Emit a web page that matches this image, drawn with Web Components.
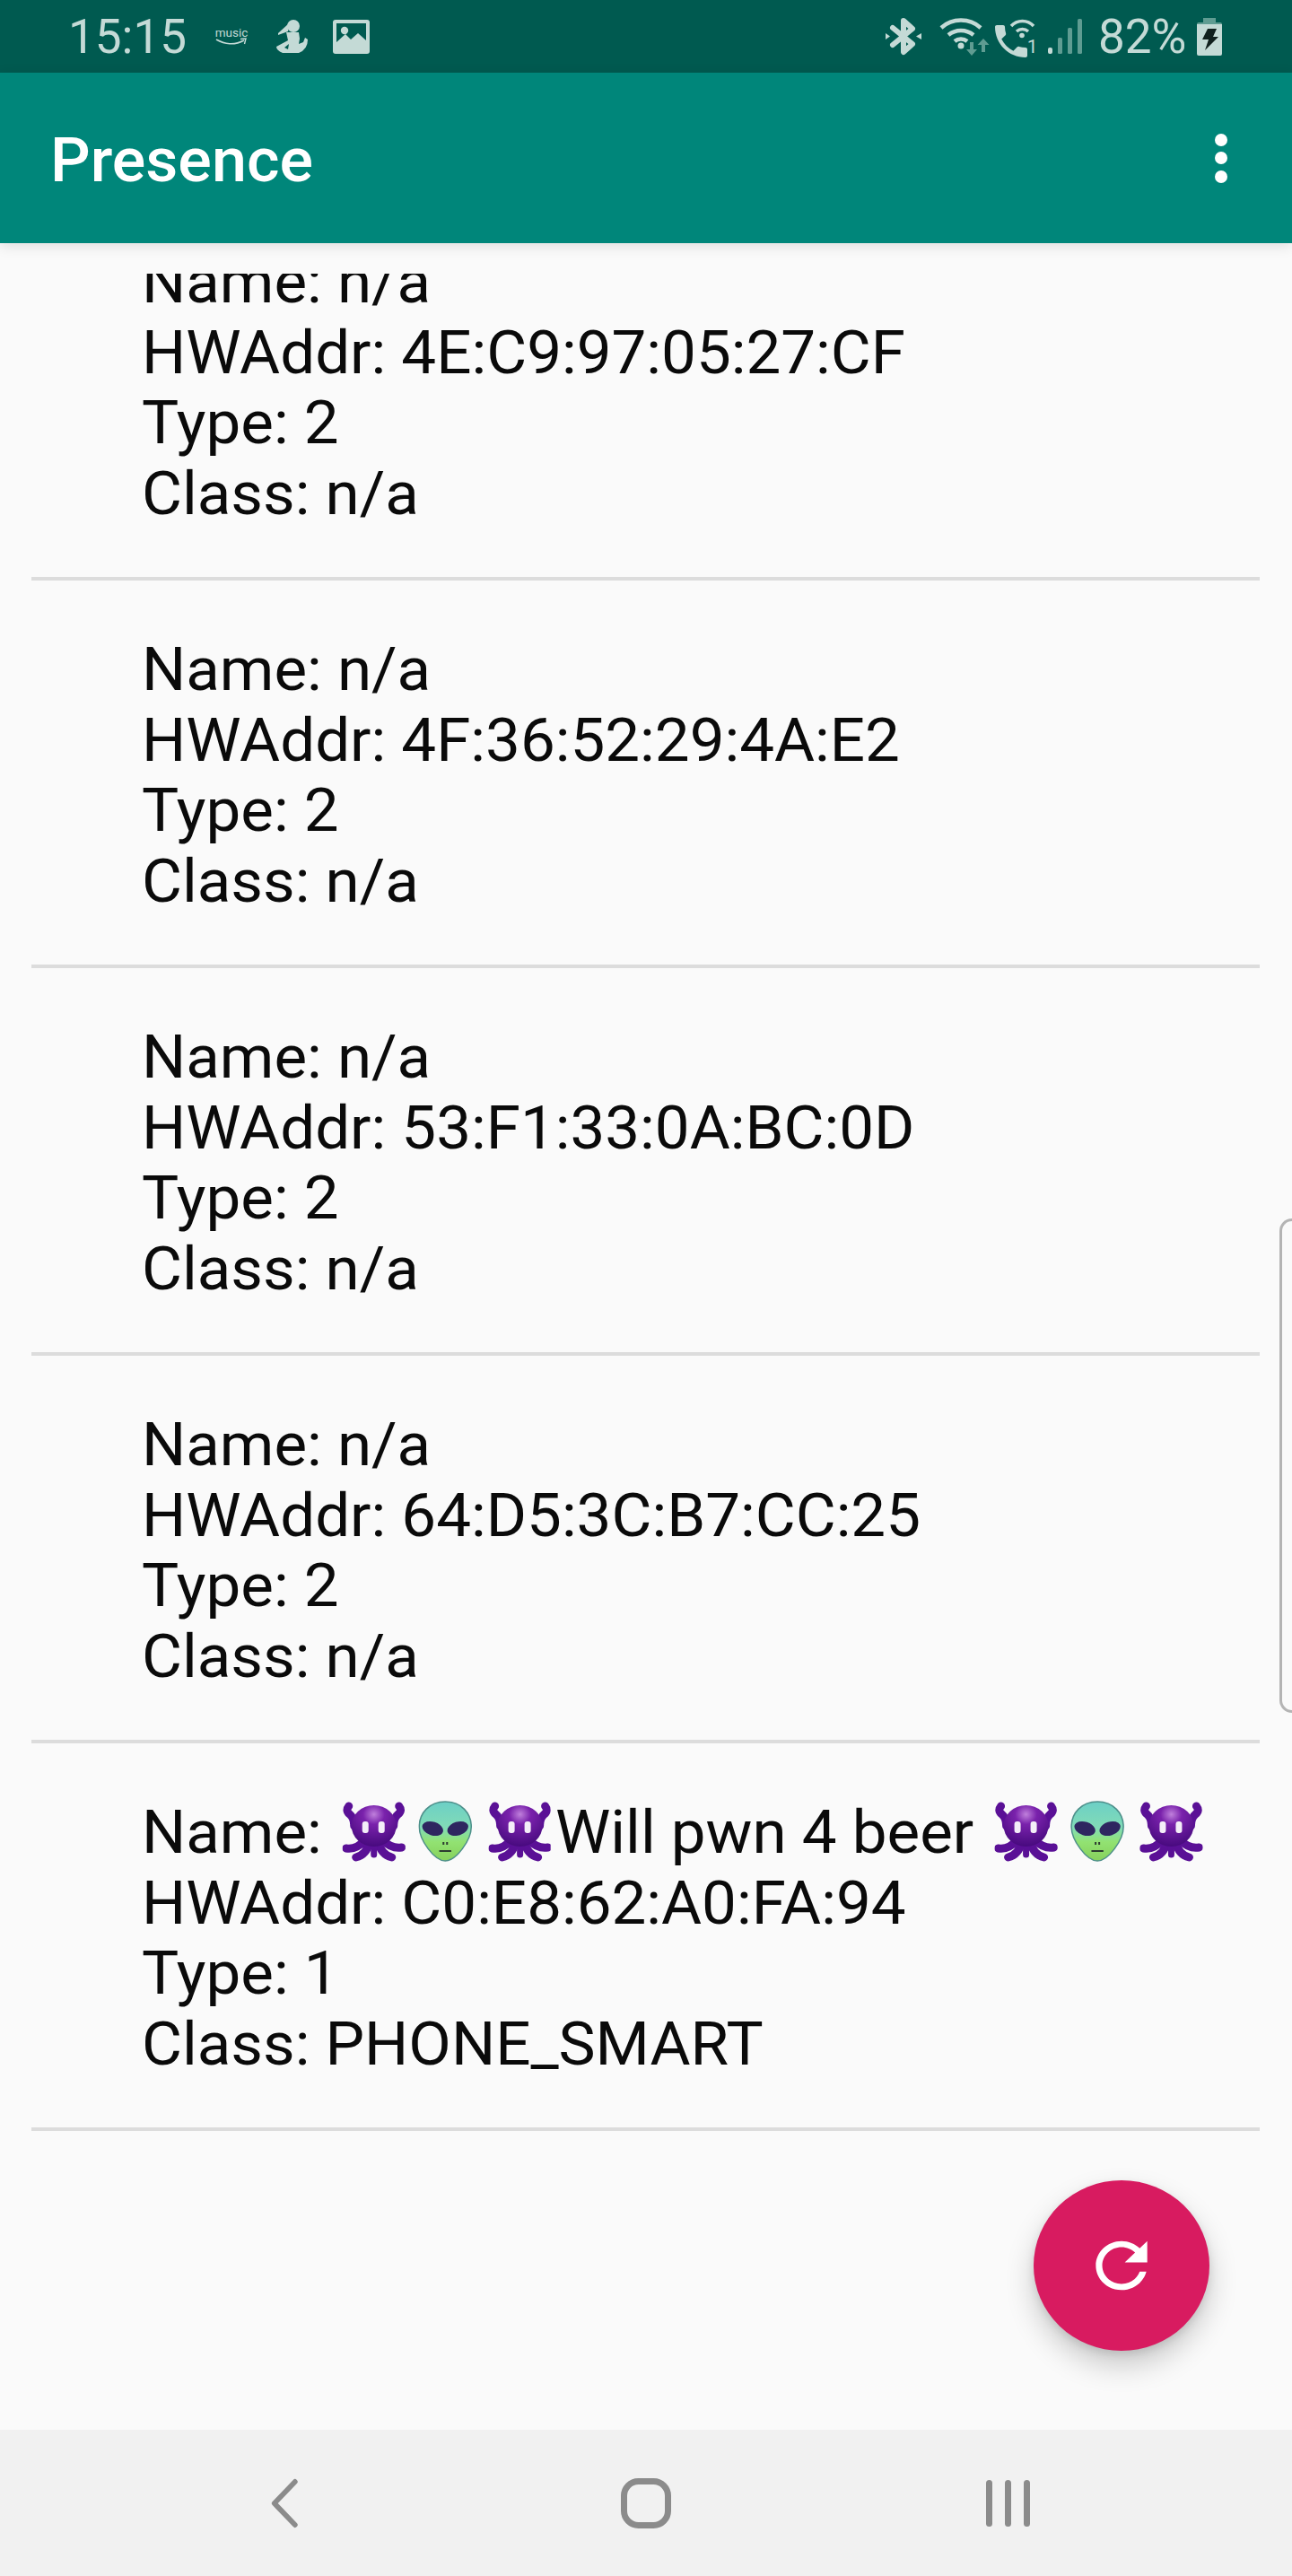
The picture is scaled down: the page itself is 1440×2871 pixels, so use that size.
<!DOCTYPE html>
<html>
<head>
<meta charset="utf-8">
<title>Presence</title>
<style>
html, body { margin: 0; padding: 0; background: #fafafa; }
</style>
</head>
<body>
<presence-app>
  <status-bar slot="status"></status-bar>
  <app-bar slot="bar" title="Presence"></app-bar>
  <device-list slot="list">
    <device-row hw="4E:C9:97:05:27:CF" type="2" cls="n/a">n/a</device-row>
    <device-row hw="4F:36:52:29:4A:E2" type="2" cls="n/a">n/a</device-row>
    <device-row hw="53:F1:33:0A:BC:0D" type="2" cls="n/a">n/a</device-row>
    <device-row hw="64:D5:3C:B7:CC:25" type="2" cls="n/a">n/a</device-row>
    <device-row hw="C0:E8:62:A0:FA:94" type="1" cls="PHONE_SMART"><emoji-octopus></emoji-octopus><emoji-alien></emoji-alien><emoji-octopus></emoji-octopus>Will pwn 4 beer <emoji-octopus></emoji-octopus><emoji-alien></emoji-alien><emoji-octopus></emoji-octopus></device-row>
  </device-list>
  <edge-handle slot="over"></edge-handle>
  <refresh-fab slot="over"></refresh-fab>
  <nav-bar slot="nav"></nav-bar>
</presence-app>

<script>
const LIGHT = '#c4dad6'
const DIM = '#5f9c92'
const DARK = '#005a50'

// status and nav bar glyphs, all in pixels of the 1440 wide screen
const ICONS = {
  music: [36, 22, `
    <text x="18" y="10.5" text-anchor="middle" font-family="Roboto, sans-serif" font-size="13.5" fill="${LIGHT}">music</text>
    <path d="M1 14 Q17 23 32 15" fill="none" stroke="${LIGHT}" stroke-width="1.6"/>
    <path d="M28 13.5 L34 13 L32.5 19" fill="none" stroke="${LIGHT}" stroke-width="1.4"/>`],
  health: [36, 39, `
    <circle cx="20" cy="8" r="7" fill="${LIGHT}"/>
    <path fill="${LIGHT}" d="M15 5 L3 16 L3 18 L14 14 Z"/>
    <path fill="${LIGHT}" d="M12 15 H26 L27 22 L26 28 L31 26 L33 21 L36 23 Q36 34 26 38 H8 Q1 35 1 31 L14 24 Z"/>
    <path fill="${DARK}" d="M15 28 L10 32 L14 34 Z"/>`],
  image: [41, 38, `
    <rect width="41" height="38" rx="3" fill="${LIGHT}"/>
    <path fill="${DARK}" d="M4 4 H37 V23 L28 15 L20 22 L14 16 L4 25 Z"/>
    <circle cx="13" cy="12" r="4.2" fill="${LIGHT}"/>`],
  bluetooth: [40, 43, `
    <path d="M8 12 L30 30 L20 39 V4 L30 13 L8 31" fill="none" stroke="${LIGHT}" stroke-width="6" stroke-linejoin="round" stroke-linecap="round"/>
    <path d="M0 18 L5 21.500 L0 25 Z M40 18 L34 21.500 L40 25 Z" fill="${LIGHT}"/>`],
  wifi: [57, 43, `
    <path d="M2 11 A33 33 0 0 1 46 11" fill="none" stroke="${LIGHT}" stroke-width="4.500"/>
    <path d="M10 19 A22 22 0 0 1 38 19" fill="none" stroke="${LIGHT}" stroke-width="4.500"/>
    <path d="M17 26 A11 11 0 0 1 31 26" fill="none" stroke="${LIGHT}" stroke-width="4.500"/>
    <circle cx="24" cy="31" r="3.500" fill="${LIGHT}"/>
    <path fill="${DIM}" d="M34 27 H38 V35 H42 L36 42 L30 35 H34 Z M47 30 H51 V38 H47 Z M49 23 L55.500 30 H42.500 Z"/>`],
  callwifi: [49, 40, `
    <g transform="translate(-5 1) scale(2)"><path fill="${LIGHT}" d="M6.620 10.790c1.440 2.830 3.760 5.140 6.590 6.590l2.200-2.200c.270-.270.670-.360 1.020-.240 1.120.370 2.330.570 3.570.570.550 0 1 .450 1 1V20c0 .550-.450 1-1 1-9.390 0-17-7.610-17-17 0-.550.450-1 1-1h3.500c.550 0 1 .450 1 1 0 1.250.200 2.450.570 3.570.110.350.030.740-.250 1.020l-2.200 2.200z"/></g>
    <path d="M19 8 A17 17 0 0 1 44 8" fill="none" stroke="${LIGHT}" stroke-width="3.500"/>
    <path d="M25 14 A10 10 0 0 1 38 14" fill="none" stroke="${LIGHT}" stroke-width="3.500"/>
    <circle cx="31" cy="18.500" r="2.800" fill="${LIGHT}"/>
    <text x="48.500" y="38" text-anchor="end" font-family="Roboto, sans-serif" font-size="21" fill="${LIGHT}">1</text>`],
  signal: [38, 39, `
    <rect x="0" y="32" width="5" height="7" rx="2" fill="${LIGHT}"/>
    <rect x="11" y="21" width="5" height="18" rx="1.500" fill="${DIM}"/>
    <rect x="22" y="10" width="5" height="29" rx="1.500" fill="${DIM}"/>
    <rect x="33" y="0" width="5" height="39" rx="1.500" fill="${DIM}"/>`],
  battery: [28, 42, `
    <path fill="${LIGHT}" d="M0 7 H28 V40 Q28 42 26 42 H2 Q0 42 0 40 Z"/>
    <path fill="${DIM}" d="M7 0 H21 V5 H26 Q28 5 28 7 H0 Q0 5 2 5 H7 Z"/>
    <path fill="#10201e" d="M12 12 H22 L18 21 H24 L9 36 L13 24 H6 Z"/>`],
  back: [32, 54, `<path d="M29 3 L5 27 M5 27 L29 51" fill="none" stroke="#8b8b8b" stroke-width="6" stroke-linecap="round" transform="scale(.96 1) translate(1 0)"/>`],
  home: [56, 56, `<rect x="3.500" y="3.500" width="49" height="49" rx="16" fill="none" stroke="#8b8b8b" stroke-width="7"/>`],
  recent: [49, 54, `
    <rect x="0" y="1" width="7" height="52" rx="3.500" fill="#8b8b8b"/>
    <rect x="21" y="1" width="7" height="52" rx="3.500" fill="#8b8b8b"/>
    <rect x="42" y="1" width="7" height="52" rx="3.500" fill="#8b8b8b"/>`],
}

class BarIcon extends HTMLElement {
  connectedCallback() {
    const [w, h, body] = ICONS[this.getAttribute('name')]
    const shadow = this.attachShadow({mode: 'open'})
    shadow.innerHTML = `
<style>
:host { display: block; line-height: 0; flex: none; }
svg { display: block; overflow: visible; }
</style>
<svg width="${w}" height="${h}" viewBox="0 0 ${w} ${h}">${body}</svg>`
  }
}
customElements.define('bar-icon', BarIcon)

class PresenceApp extends HTMLElement {
  constructor() {
    super()
    const shadow = this.attachShadow({mode: 'open'})
    shadow.innerHTML = `
<style>
:host {
  display: flex;
  flex-direction: column;
  position: relative;
  width: 1440px;
  height: 2871px;
  overflow: hidden;
  background: #fafafa;
  font-family: Roboto, "Liberation Sans", sans-serif;
}
::slotted(device-list) { flex: 1; min-height: 0; }
</style>
<slot name="status"></slot>
<slot name="bar"></slot>
<slot name="list"></slot>
<slot name="over"></slot>
<slot name="nav"></slot>`
  }
}
customElements.define('presence-app', PresenceApp)

class StatusBar extends HTMLElement {
  constructor() {
    super()
    const shadow = this.attachShadow({mode: 'open'})
    shadow.innerHTML = `
<style>
:host {
  display: flex;
  align-items: center;
  height: 81px;
  padding: 0 78px 0 76px;
  box-sizing: border-box;
  background: ${DARK};
  color: ${LIGHT};
  font-size: 53px;
  font-weight: 400;
}
.group { display: flex; align-items: center; }
.right { margin-left: auto; }
.time { width: 134px; }
.music { margin-left: 30px; }
.health { margin-left: 31px; }
.image { margin-left: 28px; }
.wifi { margin-left: 20px; margin-top: 1px; }
.callwifi { margin-left: 4px; }
.signal { margin-left: 11px; }
.pct { margin-left: 18px; width: 100px; }
.battery { margin-left: 10px; }
</style>
<div class="group">
  <span class="time">15:15</span>
  <bar-icon class="music" name="music"></bar-icon>
  <bar-icon class="health" name="health"></bar-icon>
  <bar-icon class="image" name="image"></bar-icon>
</div>
<div class="group right">
  <bar-icon name="bluetooth"></bar-icon>
  <bar-icon class="wifi" name="wifi"></bar-icon>
  <bar-icon class="callwifi" name="callwifi"></bar-icon>
  <bar-icon class="signal" name="signal"></bar-icon>
  <span class="pct">82%</span>
  <bar-icon class="battery" name="battery"></bar-icon>
</div>`
  }
}
customElements.define('status-bar', StatusBar)

class AppBar extends HTMLElement {
  connectedCallback() {
    const shadow = this.attachShadow({mode: 'open'})
    shadow.innerHTML = `
<style>
:host {
  display: flex;
  align-items: center;
  justify-content: space-between;
  height: 190px;
  padding: 0 70px 0 56px;
  box-sizing: border-box;
  background: #00867a;
  color: #fff;
  font-size: 68px;
  font-weight: 500;
  position: relative;
  z-index: 1;
  box-shadow: 0 3px 14px rgba(0,0,0,.12);
}
/* the reference is a little wider than tall, so text is stretched to fit */
span { margin-top: 6px; transform: scaleX(1.03); transform-origin: left; }
.menu { display: flex; flex-direction: column; gap: 6.5px; margin-right: 2px; }
.menu i { display: block; width: 14px; height: 14px; border-radius: 50%; background: #fff; }
</style>
<span>${this.getAttribute('title')}</span>
<div class="menu"><i></i><i></i><i></i></div>`
  }
}
customElements.define('app-bar', AppBar)

class DeviceList extends HTMLElement {
  constructor() {
    super()
    const shadow = this.attachShadow({mode: 'open'})
    shadow.innerHTML = `
<style>
/* the list keeps its top padding when scrolled, rows clip below it */
:host { display: block; padding-top: 34px; box-sizing: border-box; }
.clip { height: 100%; overflow: hidden; }
.rows { margin-top: -90px; }
</style>
<div class="clip"><div class="rows"><slot></slot></div></div>`
  }
}
customElements.define('device-list', DeviceList)

class DeviceRow extends HTMLElement {
  connectedCallback() {
    const shadow = this.attachShadow({mode: 'open'})
    shadow.innerHTML = `
<style>
:host {
  display: block;
  margin: 0 36px 0 35px;
  padding: 60px 0 54px 123px;
  border-bottom: 4px solid #dcdcdc;
  color: #0a0a0a;
  font-size: 67px;
  line-height: 78.67px;
  white-space: nowrap;
  height: 432px;
  box-sizing: border-box;
}
div { height: 78.67px; transform: scaleX(1.031); transform-origin: left; }
</style>
<div>Name: <slot></slot></div>
<div>HWAddr: ${this.getAttribute('hw')}</div>
<div>Type: ${this.getAttribute('type')}</div>
<div>Class: ${this.getAttribute('cls')}</div>`
  }
}
customElements.define('device-row', DeviceRow)

class EmojiOctopus extends HTMLElement {
  constructor() {
    super()
    const shadow = this.attachShadow({mode: 'open'})
    shadow.innerHTML = `
<style>
:host { display: inline-block; width: 78.6px; height: 68px; vertical-align: -10px; line-height: 0; }
svg { display: block; margin-left: 6px; }
</style>
<svg width="67.9" height="68" viewBox="0 0 70 68" preserveAspectRatio="none" role="img" aria-label="alien monster">
  <defs>
    <radialGradient id="b" cx=".5" cy=".22" r=".8">
      <stop offset="0" stop-color="#c080dc"/><stop offset=".3" stop-color="#7a22ac"/><stop offset="1" stop-color="#45097c"/>
    </radialGradient>
  </defs>
  <g fill="none" stroke="#5a1096" stroke-linecap="round" stroke-width="9">
    <path d="M7 6 Q3 11 8 15 Q13 19 13 28"/>
    <path d="M63 6 Q67 11 62 15 Q57 19 57 28"/>
    <path d="M4 53 Q15 55 25 44"/>
    <path d="M15 63 Q27 60 30 46"/>
    <path d="M55 63 Q43 60 40 46"/>
    <path d="M66 52 Q55 54 45 44"/>
    <path d="M35 60 L35 46" stroke-width="7"/>
  </g>
  <ellipse cx="35" cy="28" rx="25" ry="23" fill="url(#b)"/>
  <rect x="22" y="23" width="7" height="13" rx="3" fill="#f4eef8"/>
  <rect x="40" y="23" width="7" height="13" rx="3" fill="#f4eef8"/>
</svg>`
  }
}
customElements.define('emoji-octopus', EmojiOctopus)

class EmojiAlien extends HTMLElement {
  constructor() {
    super()
    const shadow = this.attachShadow({mode: 'open'})
    shadow.innerHTML = `
<style>
:host { display: inline-block; width: 78.6px; height: 68px; vertical-align: -10px; line-height: 0; }
svg { display: block; margin-left: 9px; }
</style>
<svg width="58.2" height="68" viewBox="0 0 60 68" preserveAspectRatio="none" role="img" aria-label="alien">
  <defs>
    <linearGradient id="h" x1="0" y1="0" x2="0" y2="1">
      <stop offset="0" stop-color="#6ccfc6"/><stop offset=".45" stop-color="#82dcb6"/><stop offset=".68" stop-color="#92e272"/><stop offset="1" stop-color="#86d05c"/>
    </linearGradient>
  </defs>
  <path d="M30 1 C48 1 59 14 59 29 C59 44 42 67 30 67 C18 67 1 44 1 29 C1 14 12 1 30 1 Z" fill="url(#h)" stroke="#4d8f8a" stroke-width="1.500"/>
  <ellipse cx="16" cy="31" rx="12" ry="7.500" transform="rotate(18 16 31)" fill="#2e2660"/>
  <ellipse cx="44" cy="31" rx="12" ry="7.500" transform="rotate(-18 44 31)" fill="#2e2660"/>
  <rect x="27" y="46" width="2" height="3" fill="#2c3c30"/>
  <rect x="31" y="46" width="2" height="3" fill="#2c3c30"/>
  <path d="M24 56 H36" stroke="#2c3c30" stroke-width="1.800" stroke-linecap="round"/>
</svg>`
  }
}
customElements.define('emoji-alien', EmojiAlien)

class EdgeHandle extends HTMLElement {
  constructor() {
    super()
    const shadow = this.attachShadow({mode: 'open'})
    shadow.innerHTML = `
<style>
:host {
  display: block;
  position: absolute;
  right: 0;
  top: 1358px;
  width: 14px;
  height: 551px;
  box-sizing: border-box;
  border: 3px solid #b4b4b4;
  border-right: 0;
  border-radius: 18px 0 0 18px;
}
</style>`
  }
}
customElements.define('edge-handle', EdgeHandle)

class RefreshFab extends HTMLElement {
  constructor() {
    super()
    const shadow = this.attachShadow({mode: 'open'})
    shadow.innerHTML = `
<style>
:host {
  display: flex;
  align-items: center;
  justify-content: center;
  position: absolute;
  left: 1152px;
  top: 2430px;
  width: 196px;
  height: 190px;
  border-radius: 50%;
  background: #d81b60;
  box-shadow: 0 16px 32px rgba(0,0,0,.2), 0 4px 10px rgba(0,0,0,.1);
}
svg { display: block; }
</style>
<svg width="86" height="82" viewBox="0 0 24 24" preserveAspectRatio="none"><path fill="#fff" d="M17.650 6.350C16.200 4.900 14.210 4 12 4c-4.420 0-7.990 3.580-7.990 8s3.570 8 7.990 8c3.730 0 6.840-2.550 7.730-6h-2.080c-.820 2.330-3.040 4-5.650 4-3.310 0-6-2.690-6-6s2.690-6 6-6c1.660 0 3.140.690 4.220 1.780L13 11h7V4l-2.350 2.350z"/></svg>`
  }
}
customElements.define('refresh-fab', RefreshFab)

class NavBar extends HTMLElement {
  constructor() {
    super()
    const shadow = this.attachShadow({mode: 'open'})
    shadow.innerHTML = `
<style>
:host {
  display: flex;
  align-items: center;
  height: 163px;
  padding: 0 0 0 300px;
  box-sizing: border-box;
  background: #f1f1f1;
}
.home { margin-left: 360px; }
.recent { margin-left: 351px; }
</style>
<bar-icon name="back"></bar-icon>
<bar-icon class="home" name="home"></bar-icon>
<bar-icon class="recent" name="recent"></bar-icon>`
  }
}
customElements.define('nav-bar', NavBar)
</script>
</body>
</html>
